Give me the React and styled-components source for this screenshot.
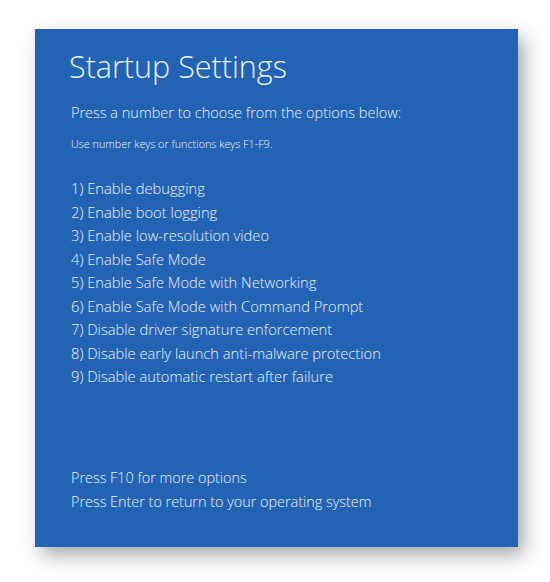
import React from 'react';
import styled, { createGlobalStyle } from 'styled-components';

const GlobalStyle = createGlobalStyle`
  html, body {
    margin: 0;
    padding: 0;
    background: #ffffff;
  }
  body {
    font-family: "Open Sans", "Noto Sans", sans-serif;
  }
`;

const Page = styled.div`
  width: 550px;
  height: 582px;
  padding: 29px 0 0 35px;
  box-sizing: border-box;
`;

const Screen = styled.div`
  width: 483px;
  height: 518px;
  box-sizing: border-box;
  background: #2264b3;
  color: #eef3fa;
  padding: 16px 20px 0 36px;
  display: flex;
  flex-direction: column;
  box-shadow: 6px 8px 18px rgba(0, 0, 0, 0.35);
`;

const Title = styled.h1`
  margin: 0 0 0 -2px;
  font-weight: 300;
  font-size: 30.5px;
  line-height: 42px;
`;

const Lead = styled.p`
  margin: 16px 0 0;
  font-size: 14.5px;
  line-height: 20px;
  font-weight: 300;
`;

const Hint = styled.p`
  margin: 14px 0 0;
  font-size: 10.8px;
  font-weight: 300;
  line-height: 14px;
`;

const Options = styled.ol`
  list-style: none;
  margin: 26px 0 0;
  padding: 0;
`;

const Option = styled.li`
  font-size: 14.7px;
  font-weight: 300;
  line-height: 23.5px;
`;

const Footer = styled.div`
  margin-top: auto;
  margin-bottom: 34px;
  font-size: 14.4px;
  font-weight: 300;
  line-height: 23.5px;
`;

const options = [
  'Enable debugging',
  'Enable boot logging',
  'Enable low-resolution video',
  'Enable Safe Mode',
  'Enable Safe Mode with Networking',
  'Enable Safe Mode with Command Prompt',
  'Disable driver signature enforcement',
  'Disable early launch anti-malware protection',
  'Disable automatic restart after failure',
];

export default function App() {
  return (
    <>
      <GlobalStyle />
      <Page>
        <Screen>
          <Title>Startup Settings</Title>
          <Lead>Press a number to choose from the options below:</Lead>
          <Hint>Use number keys or functions keys F1-F9.</Hint>
          <Options>
            {options.map((text, i) => (
              <Option key={text}>
                {i + 1}) {text}
              </Option>
            ))}
          </Options>
          <Footer>
            <div>Press F10 for more options</div>
            <div>Press Enter to return to your operating system</div>
          </Footer>
        </Screen>
      </Page>
    </>
  );
}
